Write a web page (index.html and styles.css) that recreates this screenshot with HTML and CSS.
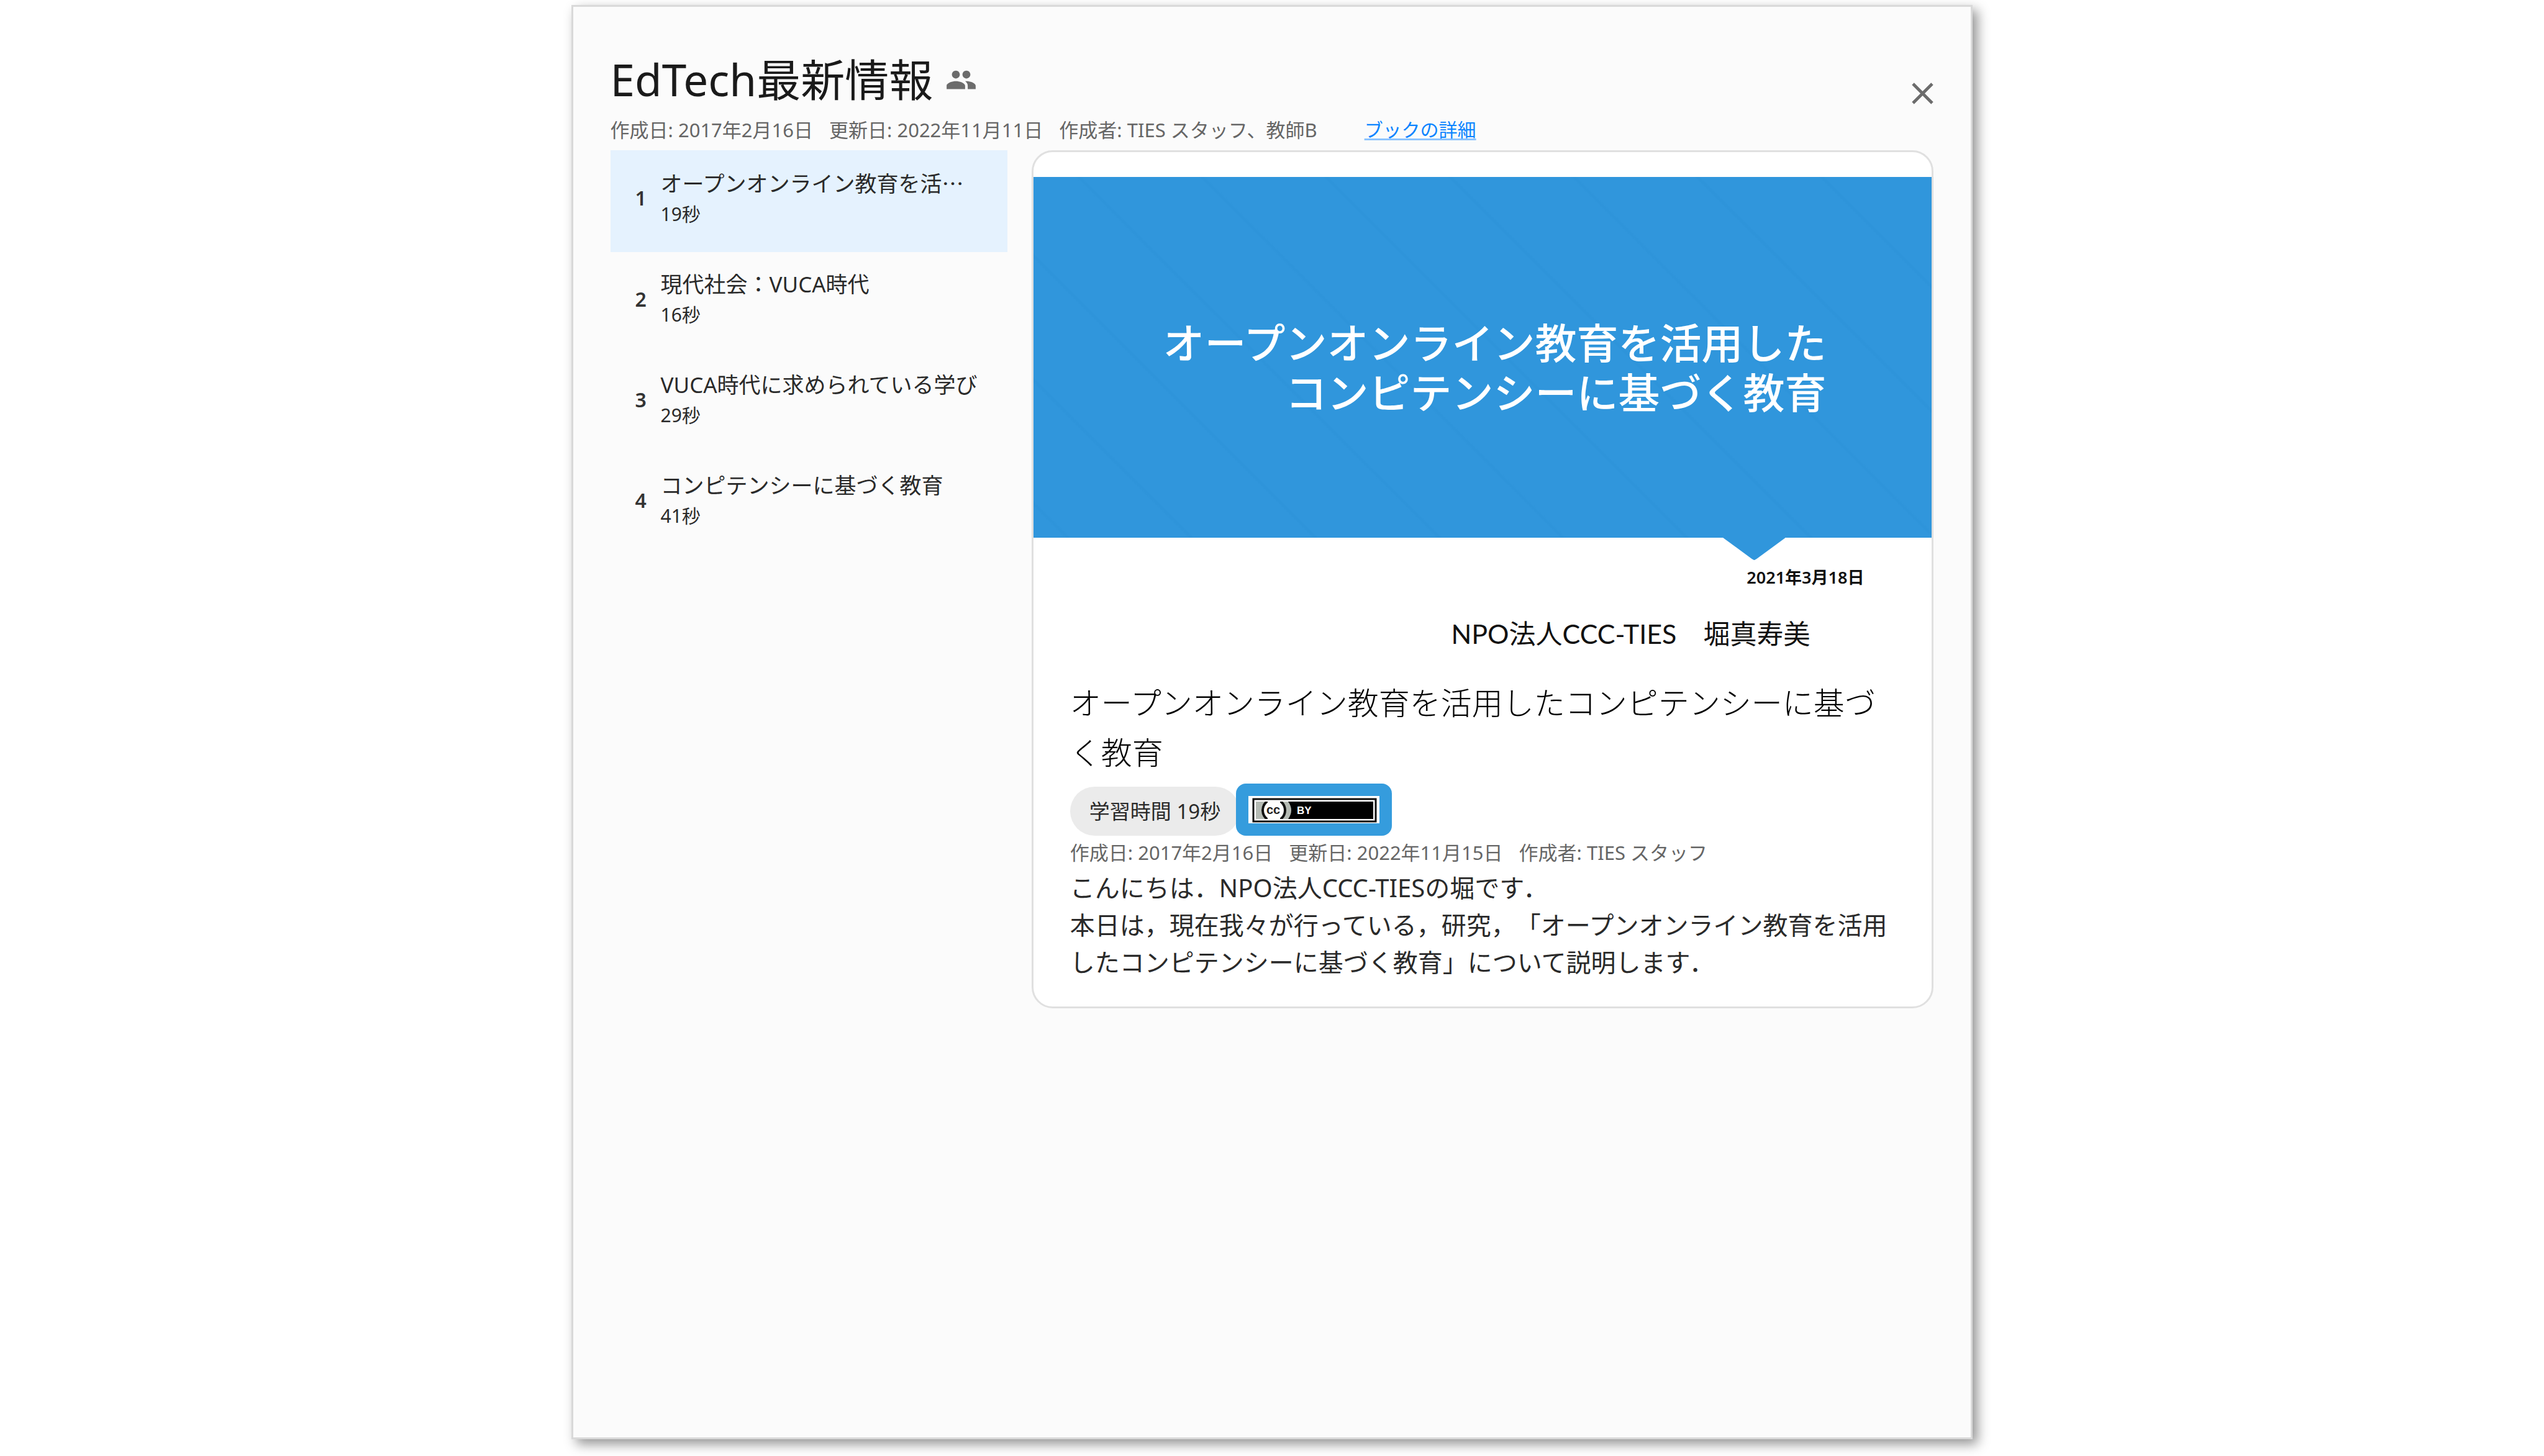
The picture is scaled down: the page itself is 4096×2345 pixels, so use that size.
FILE: index.html
```html
<!DOCTYPE html>
<html lang="ja">
<head>
<meta charset="utf-8">
<title>EdTech最新情報</title>
<link rel="stylesheet" href="styles.css">
</head>
<body>
<main class="dialog">
  <header class="header">
    <div class="header-text">
      <h1 class="title">EdTech最新情報
        <svg class="people" viewBox="0 0 24 24" aria-hidden="true"><path d="M16 11c1.66 0 2.99-1.34 2.99-3S17.66 5 16 5c-1.66 0-3 1.34-3 3s1.34 3 3 3zm-8 0c1.66 0 2.99-1.34 2.99-3S9.66 5 8 5C6.34 5 5 6.34 5 8s1.34 3 3 3zm0 2c-2.33 0-7 1.17-7 3.5V19h14v-2.5c0-2.33-4.67-3.5-7-3.5zm8 0c-.29 0-.62.02-.97.05 1.16.84 1.97 1.97 1.97 3.45V19h6v-2.5c0-2.33-4.67-3.5-7-3.5z"/></svg>
      </h1>
      <div class="meta book-meta">
        <span>作成日: 2017年2月16日</span>
        <span>更新日: 2022年11月11日</span>
        <span>作成者: TIES スタッフ、教師B</span>
        <a class="detail-link" href="#detail">ブックの詳細</a>
      </div>
    </div>
    <button class="close" type="button" aria-label="閉じる">
      <svg viewBox="0 0 24 24" aria-hidden="true"><path d="M19 6.41 17.59 5 12 10.59 6.41 5 5 6.41 10.59 12 5 17.59 6.41 19 12 13.41 17.59 19 19 17.59 13.41 12z"/></svg>
    </button>
  </header>
  <div class="content">
    <nav>
      <ol class="topics">
        <li><button class="topic active" type="button"><span class="num">1</span><span class="topic-text"><span class="topic-title">オープンオンライン教育を活<span class="ellipsis">…</span></span><span class="time">19秒</span></span></button></li>
        <li><button class="topic" type="button"><span class="num">2</span><span class="topic-text"><span class="topic-title">現代社会：VUCA時代</span><span class="time">16秒</span></span></button></li>
        <li><button class="topic" type="button"><span class="num">3</span><span class="topic-text"><span class="topic-title">VUCA時代に求められている学び</span><span class="time">29秒</span></span></button></li>
        <li><button class="topic" type="button"><span class="num">4</span><span class="topic-text"><span class="topic-title">コンピテンシーに基づく教育</span><span class="time">41秒</span></span></button></li>
      </ol>
    </nav>
    <article class="card">
      <div class="slide">
        <div class="slide-top">
          <p class="slide-title">オープンオンライン教育を活用した<br>コンピテンシーに基づく教育</p>
        </div>
        <p class="slide-date">2021年3月18日</p>
        <p class="slide-author">NPO法人CCC-TIES　堀真寿美</p>
      </div>
      <div class="card-body">
        <h2 class="card-title">オープンオンライン教育を活用したコンピテンシーに基づく教育</h2>
        <div class="chips">
          <span class="chip">学習時間 19秒</span>
          <a class="license" href="#license" aria-label="CC BY">
            <svg class="cc" viewBox="0 0 211 44" aria-hidden="true">
              <defs><clipPath id="band"><rect x="12" y="9" width="189" height="28"/></clipPath></defs>
              <rect width="211" height="44" fill="#fff"/>
              <rect x="8" y="5" width="197" height="36" fill="#fff" stroke="#111" stroke-width="3"/>
              <g clip-path="url(#band)">
                <rect x="12" y="9" width="189" height="28" fill="#000"/>
                <path d="M12 9h52q10 14 0 28H12z" fill="#b5bbb4"/>
                <circle cx="41" cy="23" r="18" fill="#fff" stroke="#111" stroke-width="4"/>
                <path d="M31 9h20v3H31zM31 34h20v3H31z" fill="#fff"/>
              </g>
              <text x="40" y="29" class="cc-mark" text-anchor="middle">cc</text>
              <text x="78" y="29" class="cc-by">BY</text>
            </svg>
          </a>
        </div>
        <div class="meta card-meta">
          <span>作成日: 2017年2月16日</span>
          <span>更新日: 2022年11月15日</span>
          <span>作成者: TIES スタッフ</span>
        </div>
        <p class="description">こんにちは．NPO法人CCC-TIESの堀です．<br>本日は，現在我々が行っている，研究，「オープンオンライン教育を活用したコンピテンシーに基づく教育」について説明します．</p>
      </div>
    </article>
  </div>
</main>
</body>
</html>
```
FILE: styles.css
```css
* {
  box-sizing: border-box;
}

body {
  margin: 0;
  padding: 8px 0 27px;
  background: #fff;
  color: #2a2a2a;
  font-family: "Noto Sans", "Noto Sans CJK JP", sans-serif;
  text-spacing-trim: space-all;
  text-autospace: no-autospace;
}

h1, h2, p, ol {
  margin: 0;
  padding: 0;
  font-weight: inherit;
}

button {
  padding: 0;
  border: 0;
  background: none;
  color: inherit;
  font: inherit;
  text-align: left;
}

.dialog {
  width: 55.1%;
  min-height: calc(100vh - 35px);
  margin: 0 auto;
  padding: 67px 60px 59px;
  border: 3px solid #d9d9d9;
  background: #fbfbfb;
  box-shadow: 8px 8px 18px rgba(0, 0, 0, 0.42);
}

.header {
  display: flex;
  justify-content: space-between;
  align-items: flex-start;
}

.title {
  display: flex;
  align-items: center;
  gap: 20px;
  font-size: 71px;
  line-height: 100px;
  color: #1a1a1a;
}

.people {
  width: 51px;
  height: 51px;
  fill: #6c6c6c;
}

.meta {
  display: flex;
  gap: 26px;
  font-size: 31px;
  line-height: 62px;
  color: #666;
}

.book-meta {
  padding-bottom: 2px;
}

.detail-link {
  margin-left: 50px;
  font-size: 30px;
  color: #0a84ff;
  text-decoration-color: #8cc4ff;
  text-decoration-thickness: 3px;
  text-underline-offset: 3px;
}

.close {
  width: 59px;
  height: 59px;
  margin: 43px -12px 0 0;
}

.close svg {
  display: block;
  fill: #6c6c6c;
}

.content {
  display: grid;
  grid-template-columns: 30% 1fr;
  gap: 39px;
  align-items: start;
}

.topics {
  list-style: none;
}

.topic {
  display: flex;
  align-items: center;
  width: 100%;
  padding: 27px 40px 35px;
}

.active {
  background: #e5f2fe;
}

.num {
  width: 41px;
  padding-bottom: 3px;
  font-size: 32px;
  font-weight: 600;
  color: #333;
}

.topic-text {
  display: flex;
  flex-direction: column;
  line-height: 50px;
}

.topic-title {
  font-size: 35px;
  white-space: nowrap;
}

.ellipsis {
  font-family: "Noto Sans CJK JP", sans-serif;
}

.time {
  font-size: 30px;
  line-height: 48px;
  padding-bottom: 2px;
}

.card {
  padding: 40px 0 41px;
  border: 3px solid #e0e0e0;
  border-radius: 34px;
  background: #fff;
}

.slide {
  aspect-ratio: 1446 / 807;
  color: #111;
  text-align: right;
}

.slide-top {
  position: relative;
  height: 72%;
  padding: 227px 170px 0 0;
  background: repeating-linear-gradient(45deg, #3096dc 0 35px, #2e94da 38px 40px, #3096dc 43px 141px);
}

.slide-top::after {
  content: "";
  position: absolute;
  top: calc(100% - 2px);
  right: 236px;
  width: 100px;
  height: 38px;
  background: #3096dc;
  clip-path: polygon(0 0, 100% 0, 100% 5%, 54% 94%, 50% 100%, 46% 94%, 0 5%);
}

.slide-title {
  color: #fff;
  font-size: 67px;
  font-weight: 500;
  line-height: 80px;
}

.slide-date {
  padding: 44px 109px 0 0;
  font-size: 27px;
  font-weight: 600;
  line-height: 40px;
}

.slide-author {
  padding: 41px 196px 0 0;
  font-family: Lato, "Noto Sans CJK JP", sans-serif;
  font-size: 43px;
  line-height: 60px;
}

.card-body {
  padding: 0 59px;
}

.card-title {
  font-size: 50px;
  font-weight: 300;
  line-height: 80px;
  color: #000;
}

.chips {
  display: flex;
  align-items: flex-end;
  padding-top: 10px;
}

.chip {
  padding: 0 31px;
  border-radius: 40px;
  background: #ebebeb;
  font-size: 33px;
  line-height: 79px;
}

.license {
  margin-left: -6px;
  padding: 20px;
  border-radius: 16px;
  background: #359cdd;
  position: relative;
}

.cc {
  display: block;
  width: 211px;
  height: 44px;
}

.cc-mark {
  font: 700 20px "Liberation Sans", sans-serif;
  fill: #222;
}

.cc-by {
  font: 700 17px "Liberation Sans", sans-serif;
  fill: #fff;
}

.card-meta {
  line-height: 54px;
}

.description {
  font-size: 40px;
  line-height: 60px;
}
```
